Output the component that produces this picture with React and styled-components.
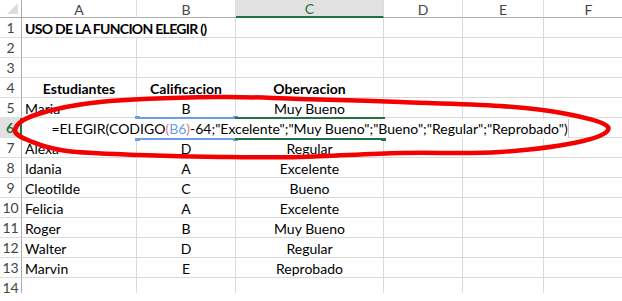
import React from 'react';
import styled, { createGlobalStyle } from 'styled-components';

const GRID_LINE = '#d9d9d9';
const HEAD_LINE = '#ababab';
const GREEN = '#217346';
const REF_BLUE = '#6d9ce6';

const GlobalStyle = createGlobalStyle`
  html, body {
    margin: 0;
    padding: 0;
    background: #fff;
  }
`;

const S = {
  Sheet: styled.div`
    position: relative;
    width: 622px;
    height: 293px;
    overflow: hidden;
    background: #fff;
    font-family: Lato, 'Liberation Sans', sans-serif;
    font-size: 14px;
    color: #000;
  `,
  Grid: styled.div`
    display: grid;
    grid-template-columns: 22px 115px 99px 148px 79px 81px 90px;
    grid-template-rows: 18px;
    grid-auto-rows: 20px;
  `,
  Corner: styled.div`
    position: relative;
    box-sizing: border-box;
    border-right: 1px solid ${HEAD_LINE};
    border-bottom: 1px solid ${HEAD_LINE};
    &::after {
      content: '';
      position: absolute;
      right: 3px;
      bottom: 3px;
      border-left: 11px solid transparent;
      border-bottom: 11px solid #dcdcdc;
    }
  `,
  ColHead: styled.div`
    box-sizing: border-box;
    display: flex;
    align-items: center;
    justify-content: center;
    border-right: 1px solid #dedede;
    border-bottom: ${p => (p.$active ? `2px solid ${GREEN}` : `1px solid ${HEAD_LINE}`)};
    background: ${p => (p.$active ? '#e1e1e1' : '#fff')};
    color: ${p => (p.$active ? GREEN : '#444')};
    font-size: 14px;
    padding-top: 1px;
  `,
  RowHead: styled.div`
    box-sizing: border-box;
    display: flex;
    align-items: center;
    justify-content: center;
    border-right: ${p => (p.$active ? `2px solid ${GREEN}` : `1px solid ${HEAD_LINE}`)};
    border-bottom: 1px solid #dedede;
    background: ${p => (p.$active ? '#e1e1e1' : '#fff')};
    color: ${p => (p.$active ? GREEN : '#444')};
    font-weight: ${p => (p.$active ? 700 : 400)};
    font-size: 14px;
  `,
  Cell: styled.div`
    box-sizing: border-box;
    display: flex;
    align-items: center;
    justify-content: ${p => (p.$center ? 'center' : 'flex-start')};
    padding: 1px 3px 0;
    white-space: nowrap;
    overflow: visible;
    border-right: 1px solid ${p => (p.$open ? 'transparent' : GRID_LINE)};
    border-bottom: 1px solid ${GRID_LINE};
    font-weight: ${p => (p.$bold ? 700 : 400)};
    letter-spacing: ${p => (p.$tight ? '-0.7px' : 'normal')};
  `,
  RefBox: styled.div`
    position: absolute;
    box-sizing: border-box;
    left: ${p => p.$left}px;
    width: ${p => p.$width}px;
    top: 117px;
    height: 23px;
    border: 2px solid ${p => p.$color};
  `,
  Knob: styled.span`
    position: absolute;
    width: 5px;
    height: 5px;
    background: ${p => p.$color};
    ${p => (p.$top ? 'top: -3px;' : 'bottom: -3px;')}
    ${p => (p.$left ? 'left: -3px;' : 'right: -3px;')}
  `,
  Editor: styled.div`
    position: absolute;
    box-sizing: border-box;
    left: 23px;
    top: 119px;
    width: 546px;
    height: 19px;
    padding-left: 28px;
    display: flex;
    align-items: center;
    justify-content: center;
    background: #fff;
    border-right: 1px solid #c6c6c6;
    white-space: nowrap;
    font-size: 14px;
    color: #000;
  `,
  Paren: styled.span`
    color: #e9747a;
  `,
  Ref: styled.span`
    color: ${REF_BLUE};
  `,
  Lasso: styled.svg`
    position: absolute;
    left: 0;
    top: 0;
    pointer-events: none;
  `,
};

const columns = ['A', 'B', 'C', 'D', 'E', 'F'];

const rows = [
  { n: 1, cells: [{ text: 'USO DE LA FUNCION ELEGIR ()', bold: true, tight: true }] },
  { n: 2, cells: [] },
  { n: 3, cells: [] },
  {
    n: 4,
    cells: [
      { text: 'Estudiantes', bold: true, center: true },
      { text: 'Calificacion', bold: true, center: true },
      { text: 'Obervacion', bold: true, center: true },
    ],
  },
  { n: 5, cells: [{ text: 'Maria' }, { text: 'B', center: true }, { text: 'Muy Bueno', center: true }] },
  { n: 6, active: true, cells: [] },
  { n: 7, cells: [{ text: 'Alexa' }, { text: 'D', center: true }, { text: 'Regular', center: true }] },
  { n: 8, cells: [{ text: 'Idania' }, { text: 'A', center: true }, { text: 'Excelente', center: true }] },
  { n: 9, cells: [{ text: 'Cleotilde' }, { text: 'C', center: true }, { text: 'Bueno', center: true }] },
  { n: 10, cells: [{ text: 'Felicia' }, { text: 'A', center: true }, { text: 'Excelente', center: true }] },
  { n: 11, cells: [{ text: 'Roger' }, { text: 'B', center: true }, { text: 'Muy Bueno', center: true }] },
  { n: 12, cells: [{ text: 'Walter' }, { text: 'D', center: true }, { text: 'Regular', center: true }] },
  { n: 13, cells: [{ text: 'Marvin' }, { text: 'E', center: true }, { text: 'Reprobado', center: true }] },
  { n: 14, cells: [] },
];

// hand-drawn red loop around row 6
const loop = [
  [15, 130], [35, 115], [100, 102], [217, 97], [300, 99], [400, 102], [500, 106],
  [567, 114], [608, 127], [583, 141], [500, 152], [400, 153], [300, 157],
  [220, 157], [140, 155], [67, 151], [30, 141],
];

const smooth = pts => {
  const n = pts.length;
  let d = `M${pts[0][0]},${pts[0][1]}`;
  for (let i = 0; i < n; i++) {
    const p0 = pts[(i - 1 + n) % n];
    const p1 = pts[i];
    const p2 = pts[(i + 1) % n];
    const p3 = pts[(i + 2) % n];
    const c1 = [p1[0] + (p2[0] - p0[0]) / 6, p1[1] + (p2[1] - p0[1]) / 6];
    const c2 = [p2[0] - (p3[0] - p1[0]) / 6, p2[1] - (p3[1] - p1[1]) / 6];
    d += ` C${c1[0].toFixed(1)},${c1[1].toFixed(1)} ${c2[0].toFixed(1)},${c2[1].toFixed(1)} ${p2[0]},${p2[1]}`;
  }
  return d + 'Z';
};

const Box = ({ left, width, color, handle }) => (
  <S.RefBox $left={left} $width={width} $color={color}>
    {handle ? (
      <S.Knob $color={color} />
    ) : (
      <>
        <S.Knob $color={color} $top $left />
        <S.Knob $color={color} $top />
        <S.Knob $color={color} $left />
        <S.Knob $color={color} />
      </>
    )}
  </S.RefBox>
);

const App = () => (
  <>
    <GlobalStyle />
    <S.Sheet>
      <S.Grid>
        <S.Corner />
        {columns.map(c => (
          <S.ColHead key={c} $active={c === 'C'}>
            {c}
          </S.ColHead>
        ))}
        {rows.map(row => (
          <React.Fragment key={row.n}>
            <S.RowHead $active={row.active}>{row.n}</S.RowHead>
            {columns.map((c, i) => {
              const cell = row.cells[i] || {};
              return (
                <S.Cell
                  key={c}
                  $bold={cell.bold}
                  $center={cell.center}
                  $tight={cell.tight}
                  $open={row.n === 1 && i === 0}
                >
                  {cell.text}
                </S.Cell>
              );
            })}
          </React.Fragment>
        ))}
      </S.Grid>

      <Box left={136} width={101} color={REF_BLUE} />
      <Box left={235} width={150} color={GREEN} handle />

      <S.Editor>
        =ELEGIR(CODIGO<S.Paren>(</S.Paren>
        <S.Ref>B6</S.Ref>
        <S.Paren>)</S.Paren>-64;"Excelente";"Muy Bueno";"Bueno";"Regular";"Reprobado")
      </S.Editor>

      <S.Lasso width="622" height="293">
        <path d={smooth(loop)} fill="none" stroke="#f40000" strokeWidth="4.5" strokeLinejoin="round" />
      </S.Lasso>
    </S.Sheet>
  </>
);

export default App;
